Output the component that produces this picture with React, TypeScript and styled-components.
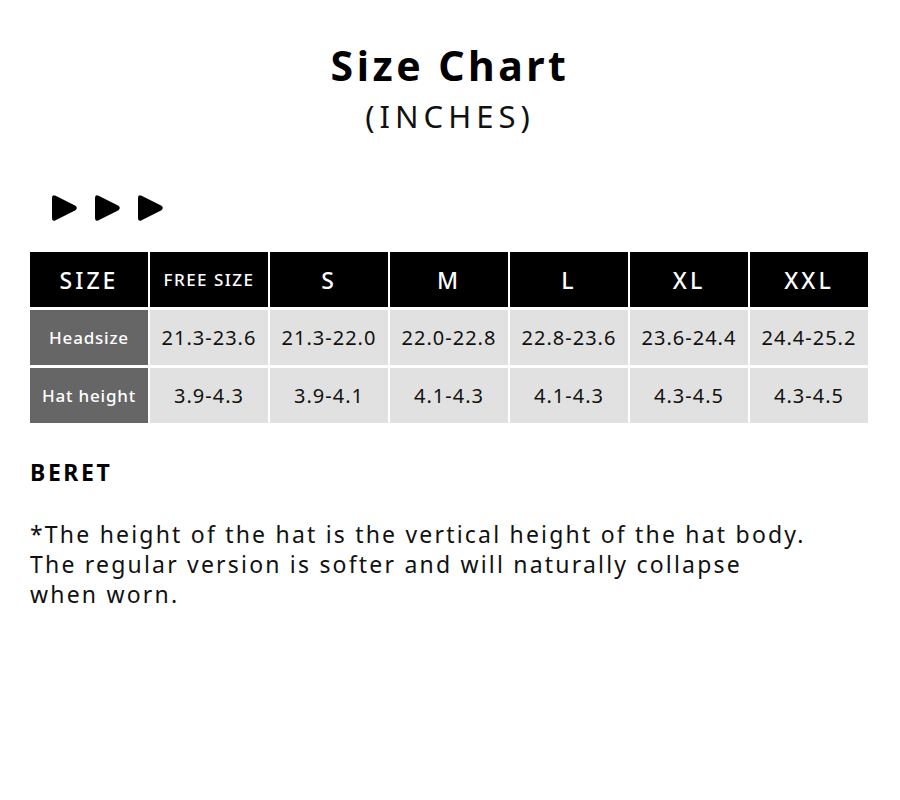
import React from 'react'
import styled, { createGlobalStyle } from 'styled-components'

const GlobalStyle = createGlobalStyle`
  html, body {
    margin: 0;
    padding: 0;
    background: #fff;
  }
  body {
    font-family: 'Noto Sans', 'Open Sans', sans-serif;
    color: #111;
  }
`

const Page = styled.div`
  width: 900px;
  height: 800px;
  box-sizing: border-box;
  padding: 38px 30px 0 30px;
  display: flex;
  flex-direction: column;
`

const Title = styled.h1`
  margin: 0;
  text-align: center;
  font-size: 41px;
  font-weight: 700;
  letter-spacing: 3.5px;
  line-height: 54px;
  color: #000;
`

const Subtitle = styled.div`
  margin-top: 4px;
  text-align: center;
  font-size: 31px;
  letter-spacing: 5px;
  line-height: 40px;
  color: #111;
`

const Arrows = styled.div`
  display: flex;
  gap: 16px;
  margin: 57px 0 0 21px;
  height: 30px;
  align-items: center;
`

const Grid = styled.div`
  margin-top: 29px;
  display: grid;
  grid-template-columns: repeat(7, 1fr);
  grid-auto-rows: 55px;
  gap: 3px 2px;
  width: 838px;
`

type CellKind = 'head' | 'label' | 'data'

const Cell = styled.div<{ $kind: CellKind; $small?: boolean }>`
  display: flex;
  align-items: center;
  justify-content: center;
  white-space: nowrap;
  background: ${({ $kind }) =>
    $kind === 'head' ? '#000' : $kind === 'label' ? '#666' : '#e1e1e1'};
  color: ${({ $kind }) => ($kind === 'data' ? '#111' : '#fff')};
  font-size: ${({ $kind, $small }) =>
    $kind === 'head' ? ($small ? '17px' : '23px') : $kind === 'label' ? '17px' : '20px'};
  font-weight: ${({ $kind }) => ($kind === 'data' ? 400 : 500)};
  letter-spacing: ${({ $kind, $small }) =>
    $kind === 'head' ? ($small ? '1.5px' : '3px') : $kind === 'label' ? '0.8px' : '1px'};
`

const Section = styled.div`
  margin-top: 33px;
  font-size: 23px;
  font-weight: 700;
  letter-spacing: 2.6px;
  color: #000;
`

const Note = styled.p`
  margin: 31px 0 0 0;
  font-size: 23px;
  line-height: 30px;
  letter-spacing: 2.2px;
  color: #111;
`

const Triangle = () => (
  <svg width="27" height="30" viewBox="0 0 27 30">
    <path d="M1 5 Q1 1 4.6 2.8 L24.5 12.8 Q27 15 24.5 17.2 L4.6 27.2 Q1 29 1 25 Z" fill="#000" />
  </svg>
)

const sizes = ['FREE SIZE', 'S', 'M', 'L', 'XL', 'XXL']
const rows: { label: string; values: string[] }[] = [
  {
    label: 'Headsize',
    values: ['21.3-23.6', '21.3-22.0', '22.0-22.8', '22.8-23.6', '23.6-24.4', '24.4-25.2'],
  },
  {
    label: 'Hat height',
    values: ['3.9-4.3', '3.9-4.1', '4.1-4.3', '4.1-4.3', '4.3-4.5', '4.3-4.5'],
  },
]

export default function App() {
  return (
    <>
      <GlobalStyle />
      <Page>
        <Title>Size Chart</Title>
        <Subtitle>(INCHES)</Subtitle>
        <Arrows>
          <Triangle />
          <Triangle />
          <Triangle />
        </Arrows>
        <Grid>
          <Cell $kind="head">SIZE</Cell>
          {sizes.map((s) => (
            <Cell key={s} $kind="head" $small={s.length > 3}>
              {s}
            </Cell>
          ))}
          {rows.map((r) => (
            <React.Fragment key={r.label}>
              <Cell $kind="label">{r.label}</Cell>
              {r.values.map((v, i) => (
                <Cell key={i} $kind="data">
                  {v}
                </Cell>
              ))}
            </React.Fragment>
          ))}
        </Grid>
        <Section>BERET</Section>
        <Note>
          *The height of the hat is the vertical height of the hat body.
          <br />
          The regular version is softer and will naturally collapse
          <br />
          when worn.
        </Note>
      </Page>
    </>
  )
}
